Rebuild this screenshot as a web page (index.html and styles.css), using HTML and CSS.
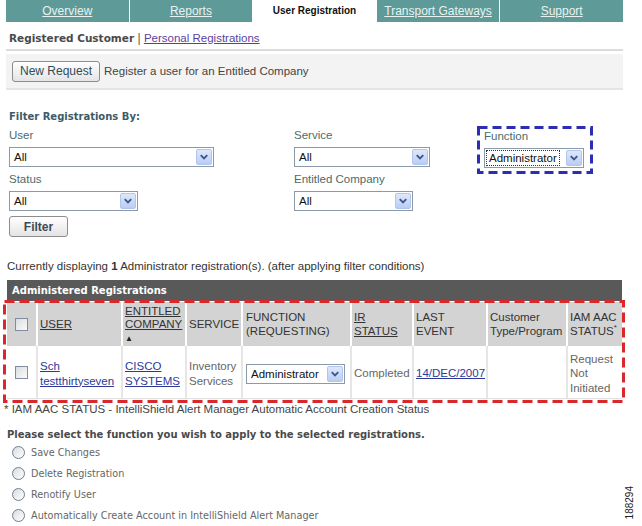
FILE: index.html
```html
<!DOCTYPE html>
<html lang="en">
<head>
  <meta charset="UTF-8" />
  <title>User Registration</title>
  <link rel="stylesheet" href="styles.css">
</head>
<body>
<div class="page">

  <!-- Tabs -->
  <nav class="tabs">
    <a class="tab" href="#">Overview</a>
    <a class="tab" href="#">Reports</a>
    <span class="tab active">User Registration</span>
    <a class="tab" href="#">Transport Gateways</a>
    <a class="tab" href="#">Support</a>
  </nav>

  <div class="crumbs"><b>Registered Customer</b> | <a href="#">Personal Registrations</a></div>
  <div class="sep"></div>

  <div class="toolbar">
    <button class="btn">New Request</button>
    <span>Register a user for an Entitled Company</span>
  </div>

  <!-- Filters -->
  <section class="filters">
    <h2>Filter Registrations By:</h2>
    <div class="filter-grid">
      <div class="col col-1">
        <label>User</label>
        <div class="select w-user"><span class="val">All</span><i class="arrow"><svg width="15" height="14" viewBox="0 0 15 14"><path d="M4 5 L7.5 8.5 L11 5" fill="none" stroke="#3f5686" stroke-width="2"/></svg></i></div>
        <label class="next">Status</label>
        <div class="select w-status"><span class="val">All</span><i class="arrow"><svg width="15" height="14" viewBox="0 0 15 14"><path d="M4 5 L7.5 8.5 L11 5" fill="none" stroke="#3f5686" stroke-width="2"/></svg></i></div>
        <button class="btn btn-filter">Filter</button>
      </div>
      <div class="col col-2">
        <label>Service</label>
        <div class="select w-service"><span class="val">All</span><i class="arrow"><svg width="15" height="14" viewBox="0 0 15 14"><path d="M4 5 L7.5 8.5 L11 5" fill="none" stroke="#3f5686" stroke-width="2"/></svg></i></div>
        <label class="next">Entitled Company</label>
        <div class="select w-company"><span class="val">All</span><i class="arrow"><svg width="15" height="14" viewBox="0 0 15 14"><path d="M4 5 L7.5 8.5 L11 5" fill="none" stroke="#3f5686" stroke-width="2"/></svg></i></div>
      </div>
      <div class="col col-3">
        <div class="function-box">
          <label>Function</label>
          <div class="select w-function"><span class="val focus">Administrator</span><i class="arrow"><svg width="15" height="14" viewBox="0 0 15 14"><path d="M4 5 L7.5 8.5 L11 5" fill="none" stroke="#3f5686" stroke-width="2"/></svg></i></div>
          <svg class="annot" width="116" height="48"><rect x="1.5" y="1.5" width="113" height="45" fill="none" stroke="#2c2cb4" stroke-width="3" stroke-dasharray="9 5"/></svg>
        </div>
      </div>
    </div>
  </section>

  <p class="count">Currently displaying <b>1</b> Administrator registration(s). (after applying filter conditions)</p>

  <!-- Registrations table -->
  <div class="registrations">
    <div class="reg-title">Administered Registrations</div>
    <table class="reg-table">
      <thead>
        <tr>
          <th class="c-check"><span class="checkbox"></span></th>
          <th class="c-user"><u>USER</u></th>
          <th class="c-company"><u>ENTITLED<br>COMPANY</u><br><span class="sort">&#9650;</span></th>
          <th class="c-service">SERVICE</th>
          <th class="c-function">FUNCTION<br>(REQUESTING)</th>
          <th class="c-status"><u>IR<br>STATUS</u></th>
          <th class="c-event">LAST<br>EVENT</th>
          <th class="c-type">Customer<br>Type/Program</th>
          <th class="c-iam">IAM AAC<br>STATUS<sup>*</sup></th>
        </tr>
      </thead>
      <tbody>
        <tr>
          <td class="c-check"><span class="checkbox"></span></td>
          <td><a href="#">Sch<br>testthirtyseven</a></td>
          <td><a href="#">CISCO<br>SYSTEMS</a></td>
          <td class="muted">Inventory<br>Services</td>
          <td class="c-function"><div class="select w-row"><span class="val">Administrator</span><i class="arrow"><svg width="15" height="14" viewBox="0 0 15 14"><path d="M4 5 L7.5 8.5 L11 5" fill="none" stroke="#3f5686" stroke-width="2"/></svg></i></div></td>
          <td class="muted">Completed</td>
          <td><a href="#">14/DEC/2007</a></td>
          <td></td>
          <td class="muted">Request<br>Not<br>Initiated</td>
        </tr>
      </tbody>
    </table>
    <svg class="annot annot-red" width="622" height="103"><rect x="1.5" y="1.5" width="619" height="100" fill="none" stroke="#d8282c" stroke-width="3" stroke-dasharray="10 5"/></svg>
  </div>

  <p class="footnote">* IAM AAC STATUS - IntelliShield Alert Manager Automatic Account Creation Status</p>

  <!-- Actions -->
  <h3 class="apply">Please select the function you wish to apply to the selected registrations.</h3>
  <ul class="actions">
    <li><span class="radio"></span>Save Changes</li>
    <li><span class="radio"></span>Delete Registration</li>
    <li><span class="radio"></span>Renotify User</li>
    <li><span class="radio"></span>Automatically Create Account in IntelliShield Alert Manager</li>
  </ul>

</div>
<div class="fig-id">188294</div>
</body>
</html>
```

FILE: styles.css
```css
body {
  margin: 0;
  font-family: "Liberation Sans", Arial, sans-serif;
  font-size: 11.5px;
  color: #333;
  background: #fff;
}

.page {
  width: 617px;
  margin-left: 6px;
}

a {
  color: #2b3a9a;
}

/* tabs */
.tabs {
  display: flex;
  gap: 1px;
  height: 22px;
}

.tab {
  flex: 1;
  background: #5e9a97;
  color: #e9f2f1;
  text-align: center;
  line-height: 22px;
  font-size: 12px;
}

.tab.active {
  background: #fff;
  color: #111;
  font-weight: bold;
  font-size: 10px;
}

.crumbs {
  height: 18px;
  padding: 9px 3px 0;
  line-height: 14px;
  color: #555;
  font-size: 12px;
}

.crumbs b {
  font-family: "DejaVu Sans", Verdana, sans-serif;
  font-size: 10.5px;
  color: #4a4a4a;
}

.crumbs a {
  color: #5b3f9e;
  font-size: 11.5px;
}

.sep {
  height: 2px;
  background: #dcdcdc;
  margin-bottom: 3px;
}

.toolbar {
  display: flex;
  align-items: center;
  gap: 4px;
  height: 34px;
  padding-left: 6px;
  background: #f3f3f3;
  border-bottom: 2px solid #e4e4e4;
  color: #444;
}

.btn {
  height: 21px;
  padding: 0 7px;
  border: 1px solid #8d8d8d;
  border-radius: 3px;
  background: linear-gradient(#ffffff, #e4e4e4);
  font-family: "Liberation Sans", Arial, sans-serif;
  font-size: 12px;
  color: #2f4b5d;
}

/* filters */
.filters {
  margin-top: 20px;
  padding-left: 3px;
}

.filters h2 {
  margin: 0 0 4px;
  font-family: "DejaVu Sans", Verdana, sans-serif;
  font-size: 10px;
  line-height: 14px;
  color: #3d5a66;
}

.filter-grid {
  display: flex;
}

.col {
  display: flex;
  flex-direction: column;
  align-items: flex-start;
}

.col-1 { width: 285px; }
.col-2 { width: 183px; }

.col label {
  line-height: 14px;
  color: #4c6b6b;
}

.col .select {
  margin-top: 5px;
}

.col label.next {
  margin-top: 5px;
}

.btn-filter {
  margin-top: 5px;
  width: 59px;
  font-weight: bold;
  color: #3c4a55;
}

.function-box {
  position: relative;
  margin-top: -2px;
  width: 116px;
  height: 48px;
  box-sizing: border-box;
  padding: 3px 7px;
}

.function-box .select {
  margin-top: 5px;
}

.annot {
  position: absolute;
  left: 0;
  top: 0;
  pointer-events: none;
}

/* select look-alike */
.select {
  display: flex;
  align-items: center;
  justify-content: space-between;
  height: 20px;
  box-sizing: border-box;
  border: 1px solid #8b9aaa;
  background: #fff;
  padding: 0 1px 0 4px;
  color: #111;
}

.select .val {
  line-height: 14px;
}

.select .val.focus {
  outline: 1px dotted #333;
  margin-left: -2px;
  padding: 0 2px;
}

.arrow {
  display: flex;
  align-items: center;
  justify-content: center;
  width: 16px;
  height: 16px;
  box-sizing: border-box;
  border: 1px solid #b3c5ea;
  border-radius: 2px;
  background: linear-gradient(#dde8fc, #b9cdf4);
}

.w-user { width: 205px; }
.w-status { width: 129px; }
.w-service { width: 136px; }
.w-company { width: 119px; }
.w-function { width: 100px; }
.w-row { width: 99px; }

.count {
  margin: 22px 0 0 1px;
  line-height: 14px;
}

/* registrations */
.registrations {
  position: relative;
  margin-top: 7px;
  margin-left: 1px;
  width: 615px;
}

.reg-title {
  height: 21px;
  line-height: 21px;
  padding-left: 5px;
  background: #595959;
  color: #fff;
  font-family: "DejaVu Sans", Verdana, sans-serif;
  font-size: 10px;
  font-weight: bold;
}

.reg-table {
  width: 615px;
  table-layout: fixed;
  border-collapse: separate;
  border-spacing: 0;
  margin-top: 1px;
}

.reg-table th,
.reg-table td {
  box-sizing: border-box;
  padding: 0 1px 0 2px;
  text-align: left;
  vertical-align: middle;
  line-height: 14.5px;
  font-weight: normal;
}

.reg-table th {
  height: 44px;
  background: #d3d3d3;
  border-left: 2px solid #fff;
  color: #333;
}

.reg-table td {
  height: 53px;
  padding-top: 3px;
  border-left: 2px solid #e6e6e6;
  border-bottom: 1px solid #e0e0e0;
}

.reg-table th:first-child,
.reg-table td:first-child {
  border-left: none;
}

.reg-table .c-check { width: 29px; text-align: center; padding: 0; }
.reg-table .c-user { width: 85px; }
.reg-table .c-company { width: 64px; line-height: 13px; }
.reg-table .c-service { width: 56px; }
.reg-table .c-function { width: 109px; padding-left: 3px; }
.reg-table .c-status { width: 62px; }
.reg-table .c-event { width: 74px; }
.reg-table .c-type { width: 80px; }
.reg-table .c-iam { width: 56px; }

.sort {
  font-size: 8px;
  line-height: 10px;
  color: #222;
}

.reg-table sup {
  font-size: 8px;
  line-height: 0;
}

.muted {
  color: #666;
}

.checkbox {
  display: inline-block;
  width: 13px;
  height: 13px;
  box-sizing: border-box;
  border: 1px solid #7e8e9e;
  background: linear-gradient(135deg, #d9dcdf, #fbfbfb);
  vertical-align: middle;
}

.annot-red {
  left: -4px;
  top: 20px;
}

.footnote {
  margin: 3px 0 0 -2px;
  line-height: 14px;
  color: #444;
}

.apply {
  margin: 12px 0 0 1px;
  font-family: "DejaVu Sans", Verdana, sans-serif;
  font-size: 10px;
  line-height: 14px;
  color: #4a4a4a;
}

.actions {
  list-style: none;
  margin: 0;
  padding: 0 0 0 6px;
}

.actions li {
  display: flex;
  align-items: center;
  gap: 6px;
  height: 21px;
  font-family: "DejaVu Sans", Verdana, sans-serif;
  font-size: 9.7px;
  color: #666;
}

.radio {
  width: 13px;
  height: 13px;
  box-sizing: border-box;
  border: 1px solid #6f7f8f;
  border-radius: 50%;
  background: linear-gradient(135deg, #d8dbde, #ffffff);
}

.fig-id {
  position: absolute;
  left: 624px;
  top: 486px;
  writing-mode: vertical-rl;
  transform: rotate(180deg);
  font-family: "Liberation Sans", Arial, sans-serif;
  font-size: 10px;
  color: #222;
}
```
